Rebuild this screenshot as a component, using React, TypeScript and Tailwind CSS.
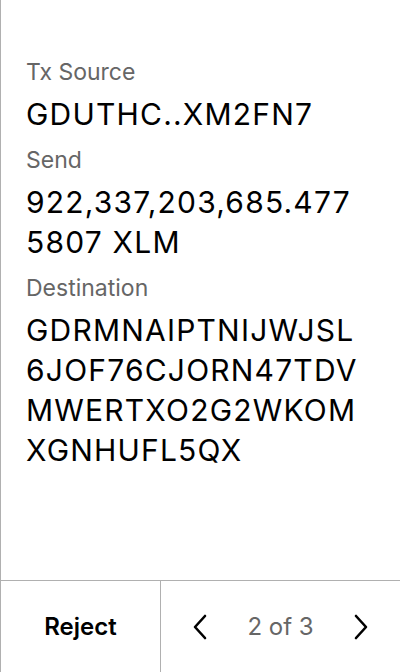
import React from "react";

function Chevron({ dir }: { dir: "left" | "right" }) {
  return (
    <svg width="16" height="26" viewBox="0 0 16 26" fill="none">
      {dir === "left" ? (
        <path d="M13 2 L3 13 L13 24" stroke="#000" strokeWidth="2.6" strokeLinecap="round" strokeLinejoin="round" />
      ) : (
        <path d="M3 2 L13 13 L3 24" stroke="#000" strokeWidth="2.6" strokeLinecap="round" strokeLinejoin="round" />
      )}
    </svg>
  );
}

function Field({ label, lines }: { label: string; lines: string[] }) {
  return (
    <div className="flex flex-col">
      <div className="text-[23px] leading-[32px] text-[#666666]">{label}</div>
      <div className="mt-[6px] mb-[10px] flex flex-col text-[30px] leading-[40px] tracking-[1.2px] text-black whitespace-nowrap">
        {lines.map((l, i) => (
          <span key={i}>{l}</span>
        ))}
      </div>
    </div>
  );
}

export default function App() {
  return (
    <div
      className="w-[400px] h-[672px] flex flex-col bg-white border-l border-[#b0b0b0]"
      style={{ fontFamily: "Inter, 'Liberation Sans', sans-serif" }}
    >
      <div className="flex-1 flex flex-col pl-[25px] pr-[20px] pt-14 overflow-hidden">
        <Field label="Tx Source" lines={["GDUTHC..XM2FN7"]} />
        <Field label="Send" lines={["922,337,203,685.477", "5807 XLM"]} />
        <Field
          label="Destination"
          lines={["GDRMNAIPTNIJWJSL", "6JOF76CJORN47TDV", "MWERTXO2G2WKOM", "XGNHUFL5QX"]}
        />
      </div>
      <div className="h-[92px] flex border-t border-[#b0b0b0]">
        <div className="w-[160px] flex items-center justify-center border-r border-[#b0b0b0] text-[24px] font-semibold text-black">
          Reject
        </div>
        <div className="flex-1 flex items-center justify-between px-[31px]">
          <Chevron dir="left" />
          <span className="text-[24px] text-[#666666]">2 of 3</span>
          <Chevron dir="right" />
        </div>
      </div>
    </div>
  );
}
